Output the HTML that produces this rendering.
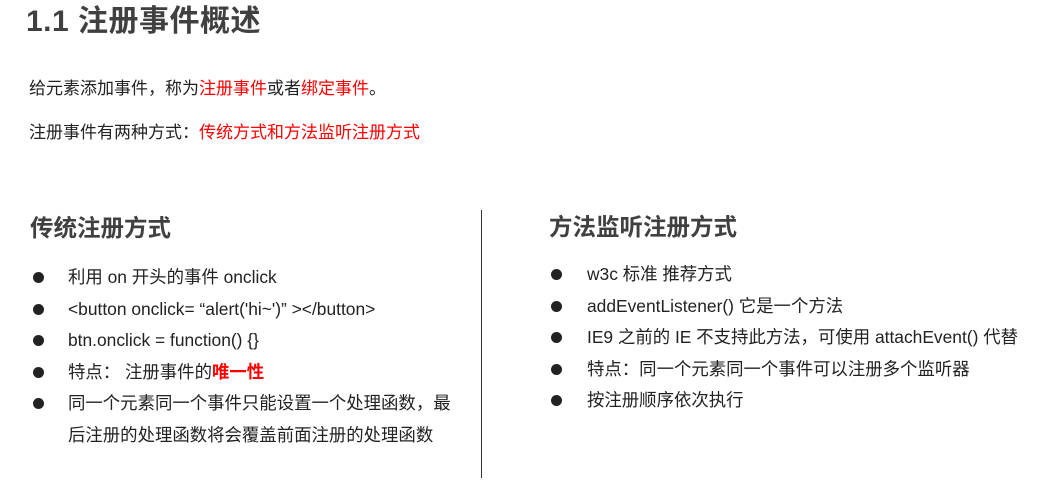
<!DOCTYPE html>
<html><head><meta charset="utf-8"><style>
body{margin:0;width:1041px;height:484px;background:#fff;position:relative;overflow:hidden;font-family:"Liberation Sans","Noto Sans CJK SC",sans-serif;color:#222}
.a{position:absolute;white-space:nowrap}
.r{color:#f00}
h1{position:absolute;left:26px;top:2px;margin:0;font-size:30px;font-weight:bold;color:#404040;line-height:40px;letter-spacing:0.5px}
h2{position:absolute;margin:0;font-size:23.5px;font-weight:bold;color:#404040;line-height:30px}
.p{font-size:17px;line-height:22px}
ul{position:absolute;margin:0;padding:0;list-style:none;font-size:17.4px;color:#222}
li{position:relative;height:31.5px;line-height:31.5px;white-space:nowrap}
li:before{content:"";position:absolute;width:11px;height:11px;border-radius:50%;background:#222;top:10px}
.L li{padding-left:38px}.L li:before{left:3px}
.R li{padding-left:38px}.R li:before{left:2px}
.L li:last-child:before{display:none}
</style></head><body>
<h1>1.1 注册事件概述</h1>
<div class="a p" style="left:29px;top:78px">给元素添加事件，称为<span class="r">注册事件</span>或者<span class="r">绑定事件</span>。</div>
<div class="a p" style="left:29px;top:122px">注册事件有两种方式：<span class="r">传统方式和方法监听注册方式</span></div>
<h2 style="left:30px;top:213px">传统注册方式</h2>
<h2 style="left:549px;top:212px">方法监听注册方式</h2>
<div class="a" style="left:481px;top:210px;width:1px;height:268px;background:#333"></div>
<ul class="L" style="left:30px;top:262px">
<li>利用 on 开头的事件 onclick</li>
<li>&lt;button onclick= “alert('hi~')” &gt;&lt;/button&gt;</li>
<li>btn.onclick = function() {}</li>
<li>特点： 注册事件的<b class="r">唯一性</b></li>
<li>同一个元素同一个事件只能设置一个处理函数，最</li>
<li style="height:31px">后注册的处理函数将会覆盖前面注册的处理函数</li>
</ul>
<ul class="R" style="left:549px;top:259px">
<li>w3c 标准 推荐方式</li>
<li>addEventListener() 它是一个方法</li>
<li>IE9 之前的 IE 不支持此方法，可使用 attachEvent() 代替</li>
<li>特点：同一个元素同一个事件可以注册多个监听器</li>
<li>按注册顺序依次执行</li>
</ul>
</body></html>
